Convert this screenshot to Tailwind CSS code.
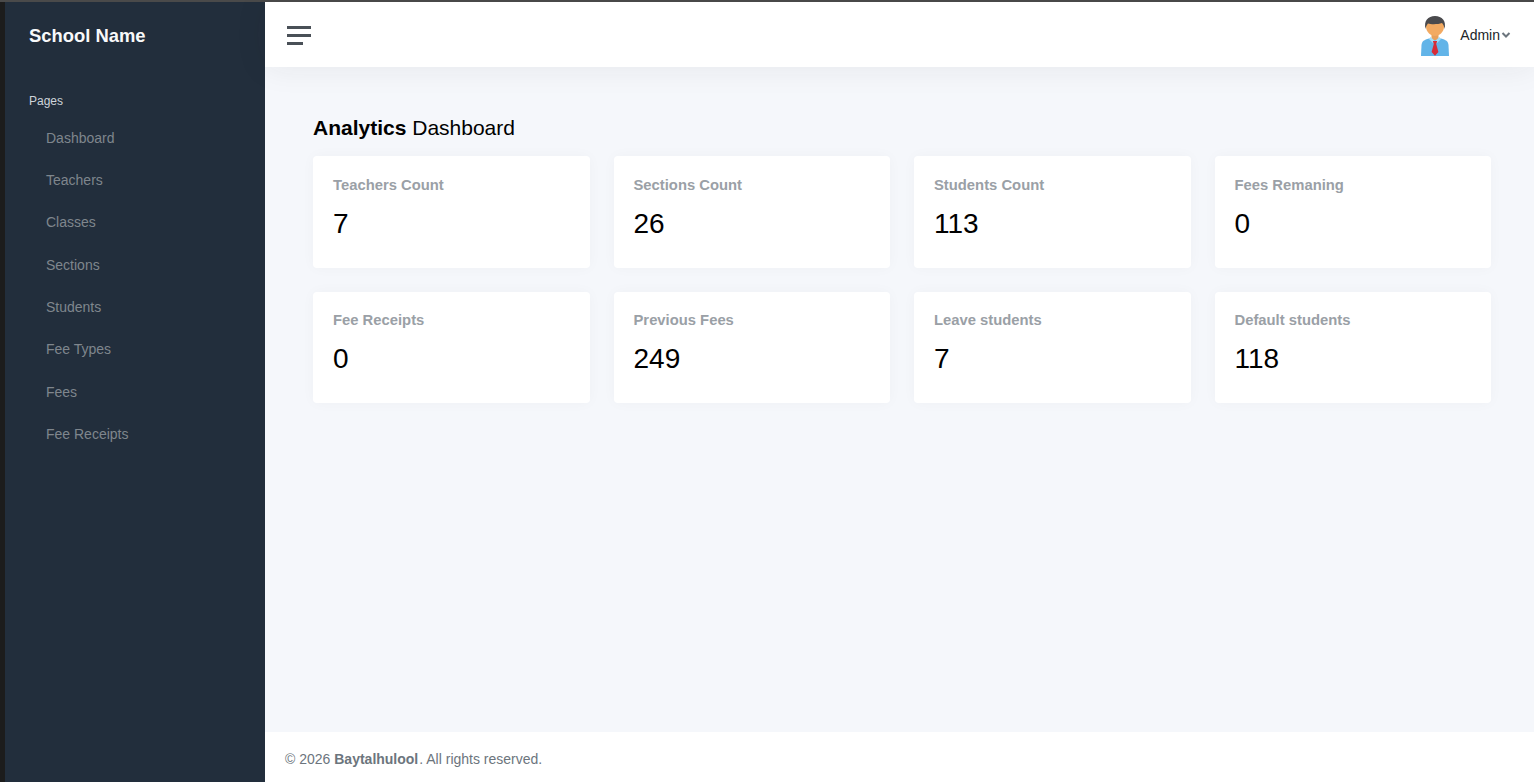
<!DOCTYPE html>
<html>
<head>
<meta charset="utf-8">
<script src="https://cdn.jsdelivr.net/npm/@tailwindcss/browser@4"></script>
</head>
<body class="h-[782px] w-[1534px] overflow-hidden bg-[#f5f7fb] font-['Liberation_Sans',Arial,sans-serif]">
<div class="flex flex-col h-[782px]">
  <div class="h-[2px] bg-[#4a4a4a] shrink-0"></div>
  <div class="flex flex-1 min-h-0">
    <div class="w-[5px] bg-[#1c1c1c] shrink-0"></div>
    <aside class="w-[260px] shrink-0 bg-[#222e3c] flex flex-col">
      <div class="pl-6 pt-[23px] text-[18.4px] leading-[22px] font-bold text-[#f8f9fa]">School Name</div>
      <div class="pl-6 mt-[47px] text-[12px] leading-[14px] text-[#ced4da]">Pages</div>
      <nav class="mt-[9px] flex flex-col text-[14px] text-[#7f868d]">
        <a class="pl-[41px] h-[42.34px] flex items-center">Dashboard</a>
        <a class="pl-[41px] h-[42.34px] flex items-center">Teachers</a>
        <a class="pl-[41px] h-[42.34px] flex items-center">Classes</a>
        <a class="pl-[41px] h-[42.34px] flex items-center">Sections</a>
        <a class="pl-[41px] h-[42.34px] flex items-center">Students</a>
        <a class="pl-[41px] h-[42.34px] flex items-center">Fee Types</a>
        <a class="pl-[41px] h-[42.34px] flex items-center">Fees</a>
        <a class="pl-[41px] h-[42.34px] flex items-center">Fee Receipts</a>
      </nav>
    </aside>
    <div class="flex-1 min-w-0 flex flex-col">
      <header class="h-[65px] shrink-0 bg-white flex items-center justify-between pl-[22px] pr-[23px] shadow-[0_0_32px_rgba(33,37,41,0.08)] relative">
        <div class="flex flex-col gap-[5px] w-[24px] mt-[2px]">
          <span class="block h-[3px] w-[24px] bg-[#495057]"></span>
          <span class="block h-[3px] w-[24px] bg-[#495057]"></span>
          <span class="block h-[3px] w-[16px] bg-[#495057]"></span>
        </div>
        <div class="flex items-center mt-[2px]">
          <svg class="w-[30px] h-[40px] mr-[10px]" viewBox="0 0 30 40">
            <path d="M1 40 L1.5 29 C2 25 4 24 9 22.5 L21 22.5 C26 24 28 25 28.5 29 L29 40 Z" fill="#62b4e8"/>
            <rect x="11.5" y="16" width="7" height="8" fill="#e6a05c"/>
            <path d="M10.5 21 L15 25 L19.5 21 L21 23 L16.5 27.5 L15 26 L13.5 27.5 L9 23 Z" fill="#a5dcf8"/>
            <path d="M12.8 25 L17.2 25 L16.2 28 L18.4 36 L15 39.8 L11.6 36 L13.8 28 Z" fill="#d62c38"/>
            <path d="M6 8 C6 5 24 5 24 8 L24 11 C24 16 19 20 15 20 C11 20 6 16 6 11 Z" fill="#f2aa62"/>
            <path d="M5.5 13 C3.5 5 8 0 15 0 C22 0 26.5 5 24.5 13 C24 10 23.5 8.5 22 7 C18 8.5 11 8.5 8 7.5 C6.5 9 6 10.5 5.5 13 Z" fill="#4a4a4d"/>
          </svg>
          <span class="text-[14px] text-[#212529]">Admin</span>
          <svg class="w-[10px] h-[10px] ml-[1px] mt-[-1px]" viewBox="0 0 10 10" fill="none" stroke="#6c757d" stroke-width="2"><path d="M1.5 3 L5 6.5 L8.5 3"/></svg>
        </div>
      </header>
      <main class="flex-1 min-h-0 pt-[48px] pl-[48px] pr-[43px]">
        <h1 class="text-[21px] leading-[25px] text-black mb-[16px]"><b>Analytics</b> Dashboard</h1>
        <div class="grid grid-cols-4 gap-[24px]">
          <div class="bg-white rounded-[4px] h-[111.6px] pt-[20px] pl-[20px] shadow-[0_0_14px_rgba(33,37,41,0.03)]"><div class="text-[14.8px] leading-[18px] font-bold text-[#9aa0a6]">Teachers Count</div><div class="mt-[14px] text-[28px] leading-[32px] text-black">7</div></div>
          <div class="bg-white rounded-[4px] h-[111.6px] pt-[20px] pl-[20px] shadow-[0_0_14px_rgba(33,37,41,0.03)]"><div class="text-[14.8px] leading-[18px] font-bold text-[#9aa0a6]">Sections Count</div><div class="mt-[14px] text-[28px] leading-[32px] text-black">26</div></div>
          <div class="bg-white rounded-[4px] h-[111.6px] pt-[20px] pl-[20px] shadow-[0_0_14px_rgba(33,37,41,0.03)]"><div class="text-[14.8px] leading-[18px] font-bold text-[#9aa0a6]">Students Count</div><div class="mt-[14px] text-[28px] leading-[32px] text-black">113</div></div>
          <div class="bg-white rounded-[4px] h-[111.6px] pt-[20px] pl-[20px] shadow-[0_0_14px_rgba(33,37,41,0.03)]"><div class="text-[14.8px] leading-[18px] font-bold text-[#9aa0a6]">Fees Remaning</div><div class="mt-[14px] text-[28px] leading-[32px] text-black">0</div></div>
          <div class="bg-white rounded-[4px] h-[111.6px] pt-[19.4px] pl-[20px] shadow-[0_0_14px_rgba(33,37,41,0.03)]"><div class="text-[14.8px] leading-[18px] font-bold text-[#9aa0a6]">Fee Receipts</div><div class="mt-[14px] text-[28px] leading-[32px] text-black">0</div></div>
          <div class="bg-white rounded-[4px] h-[111.6px] pt-[19.4px] pl-[20px] shadow-[0_0_14px_rgba(33,37,41,0.03)]"><div class="text-[14.8px] leading-[18px] font-bold text-[#9aa0a6]">Previous Fees</div><div class="mt-[14px] text-[28px] leading-[32px] text-black">249</div></div>
          <div class="bg-white rounded-[4px] h-[111.6px] pt-[19.4px] pl-[20px] shadow-[0_0_14px_rgba(33,37,41,0.03)]"><div class="text-[14.8px] leading-[18px] font-bold text-[#9aa0a6]">Leave students</div><div class="mt-[14px] text-[28px] leading-[32px] text-black">7</div></div>
          <div class="bg-white rounded-[4px] h-[111.6px] pt-[19.4px] pl-[20px] shadow-[0_0_14px_rgba(33,37,41,0.03)]"><div class="text-[14.8px] leading-[18px] font-bold text-[#9aa0a6]">Default students</div><div class="mt-[14px] text-[28px] leading-[32px] text-black">118</div></div>
        </div>
      </main>
      <footer class="h-[50px] shrink-0 bg-white pl-[20px] pt-[5px] flex items-center text-[14px] text-[#6c757d]"><span>© 2026 <b class="pr-[1px]">Baytalhulool</b>. All rights reserved.</span></footer>
    </div>
  </div>
</div>
</body>
</html>
